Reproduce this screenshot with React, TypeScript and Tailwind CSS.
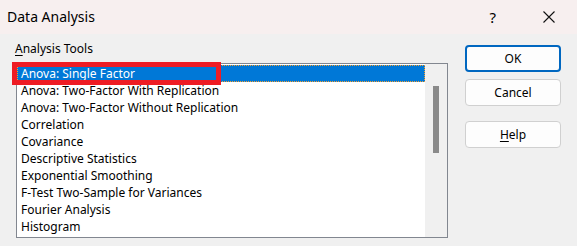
const tools = [
  "Anova: Single Factor",
  "Anova: Two-Factor With Replication",
  "Anova: Two-Factor Without Replication",
  "Correlation",
  "Covariance",
  "Descriptive Statistics",
  "Exponential Smoothing",
  "F-Test Two-Sample for Variances",
  "Fourier Analysis",
  "Histogram",
];

function DialogButton({ label, accel, primary }: { label: string; accel?: number; primary?: boolean }) {
  const chars = label.split("");
  return (
    <button
      className={`h-[27px] w-[96px] rounded-[4px] bg-[#fdfdfd] text-[12px] text-black ${
        primary ? "border-2 border-[#0067c0]" : "border border-[#d0d0d0]"
      }`}
    >
      {chars.map((c, i) =>
        i === accel ? (
          <span key={i} className="underline underline-offset-2">
            {c}
          </span>
        ) : (
          <span key={i}>{c}</span>
        )
      )}
    </button>
  );
}

export default function App() {
  return (
    <div className="w-[577px] h-[246px] overflow-hidden bg-[#f0f0f0] font-['Noto_Sans',sans-serif] text-black">
      {/* title bar */}
      <div className="h-[34px] bg-[#f7efef] flex items-center">
        <span className="pl-[7px] text-[14px] leading-none">Data Analysis</span>
        <span className="ml-auto text-[15px] leading-none mr-[47px]">?</span>
        <svg width="12" height="12" viewBox="0 0 12 12" className="mr-[22px]">
          <path d="M0.5 0.5L11.5 11.5M11.5 0.5L0.5 11.5" stroke="#111" strokeWidth="1.1" />
        </svg>
      </div>

      <div className="flex">
        <div className="pl-[16px]">
          <div className="mt-[7px] h-[16px] text-[12px] leading-[16px] -ml-[1px]">
            <span className="underline underline-offset-2">A</span>nalysis Tools
          </div>
          <div className="relative mt-[6px] w-[432px] h-[175px] border border-[#828790] bg-white flex">
            <ul className="w-[408px] pt-[1px]">
              {tools.map((t, i) => (
                <li
                  key={t}
                  className={`h-[17px] pl-[3px] text-[12px] leading-[15px] whitespace-nowrap ${
                    i === 0
                      ? "bg-[#0078d7] text-white border border-dotted border-[#f5a030]"
                      : "border border-transparent"
                  }`}
                >
                  {t}
                </li>
              ))}
            </ul>
            <div className="flex-1 bg-[#f0f0f0]">
              <div className="ml-[8px] mt-[22px] w-[6px] h-[67px] bg-[#8a8a8a]" />
            </div>
            {/* red highlight box */}
            <div className="absolute left-[-5px] top-[-2px] w-[209px] h-[23px] border-[5px] border-[#ee1c24]" />
          </div>
        </div>

        <div className="ml-[17px] mt-[11px] flex flex-col">
          <DialogButton label="OK" primary />
          <div className="h-[7px]" />
          <DialogButton label="Cancel" />
          <div className="h-[15px]" />
          <DialogButton label="Help" accel={0} />
        </div>
      </div>
    </div>
  );
}
